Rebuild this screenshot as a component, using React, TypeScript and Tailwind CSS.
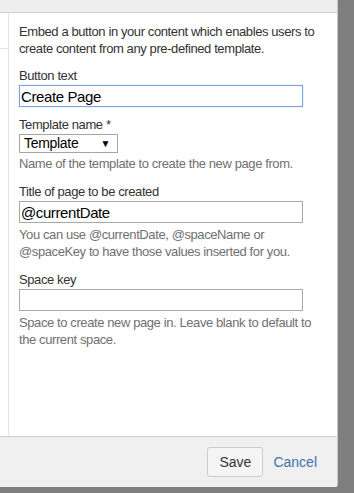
import React from 'react';

const font = { fontFamily: '"Liberation Sans", Arial, sans-serif' };

export default function App() {
  return (
    <div className="w-[354px] h-[493px] bg-[#7f7f7f] overflow-hidden" style={font}>
      <div className="w-[338px] h-[487px] bg-white flex flex-col rounded-br-[3px] border-r border-[#c8c8c8] overflow-hidden">
        {/* top strip */}
        <div className="h-[13px] shrink-0 bg-[#eeeeee] border-b border-[#cccccc]" />

        <div className="flex flex-1 min-h-0">
          {/* left nav column */}
          <div className="w-[9px] shrink-0 border-r border-[#e5e5e5]">
            <div className="h-[36px] border-b border-[#e5e5e5]" />
          </div>

          {/* form */}
          <div className="flex-1 pl-[10px] pr-[8px] pt-[10px] text-[13px] leading-[17px] tracking-[-0.4px] text-[#333333]">
            <p>Embed a button in your content which enables users to create content from any pre-defined template.</p>

            <div className="mt-[10px]">
              <label className="block">Button text</label>
              <input
                type="text"
                defaultValue="Create Page"
                className="mt-[1px] block w-[284px] h-[22px] px-[1px] text-[15px] tracking-[-0.4px] text-black border border-[#7da2e3] outline-none shadow-[0_0_1px_#9ab8ec]"
              />
            </div>

            <div className="mt-[9px]">
              <label className="block">Template name *</label>
              <div className="mt-[1px] w-[99px] h-[19px] border border-[#a6a6a6] flex items-center justify-between pl-[4px] pr-[7px] text-[14px] tracking-[-0.3px] text-black">
                <span>Template</span>
                <span className="text-[10px] leading-none">▼</span>
              </div>
              <p className="mt-[2px] text-[#707070]">Name of the template to create the new page from.</p>
            </div>

            <div className="mt-[11px]">
              <label className="block">Title of page to be created</label>
              <input
                type="text"
                defaultValue="@currentDate"
                className="mt-[1px] block w-[284px] h-[22px] px-[1px] text-[15px] tracking-[-0.4px] text-black border border-[#a9a9a9] outline-none"
              />
              <p className="mt-[3px] text-[#707070]">You can use @currentDate, @spaceName or @spaceKey to have those values inserted for you.</p>
            </div>

            <div className="mt-[11px]">
              <label className="block">Space key</label>
              <input
                type="text"
                className="mt-[1px] block w-[284px] h-[22px] px-[1px] text-[15px] text-black border border-[#a9a9a9] outline-none"
              />
              <p className="mt-[3px] text-[#707070]">Space to create new page in. Leave blank to default to the current space.</p>
            </div>
          </div>
        </div>

        {/* footer */}
        <div className="h-[51px] shrink-0 bg-[#f0f0f0] border-t border-[#cccccc] flex items-center justify-end pr-[20px] gap-[10px]">
          <button className="h-[30px] px-[11px] bg-[#f5f5f5] border border-[#cccccc] rounded-[3px] text-[14px] text-[#333333]">
            Save
          </button>
          <button className="text-[14px] text-[#3b73af]">Cancel</button>
        </div>
      </div>
    </div>
  );
}
